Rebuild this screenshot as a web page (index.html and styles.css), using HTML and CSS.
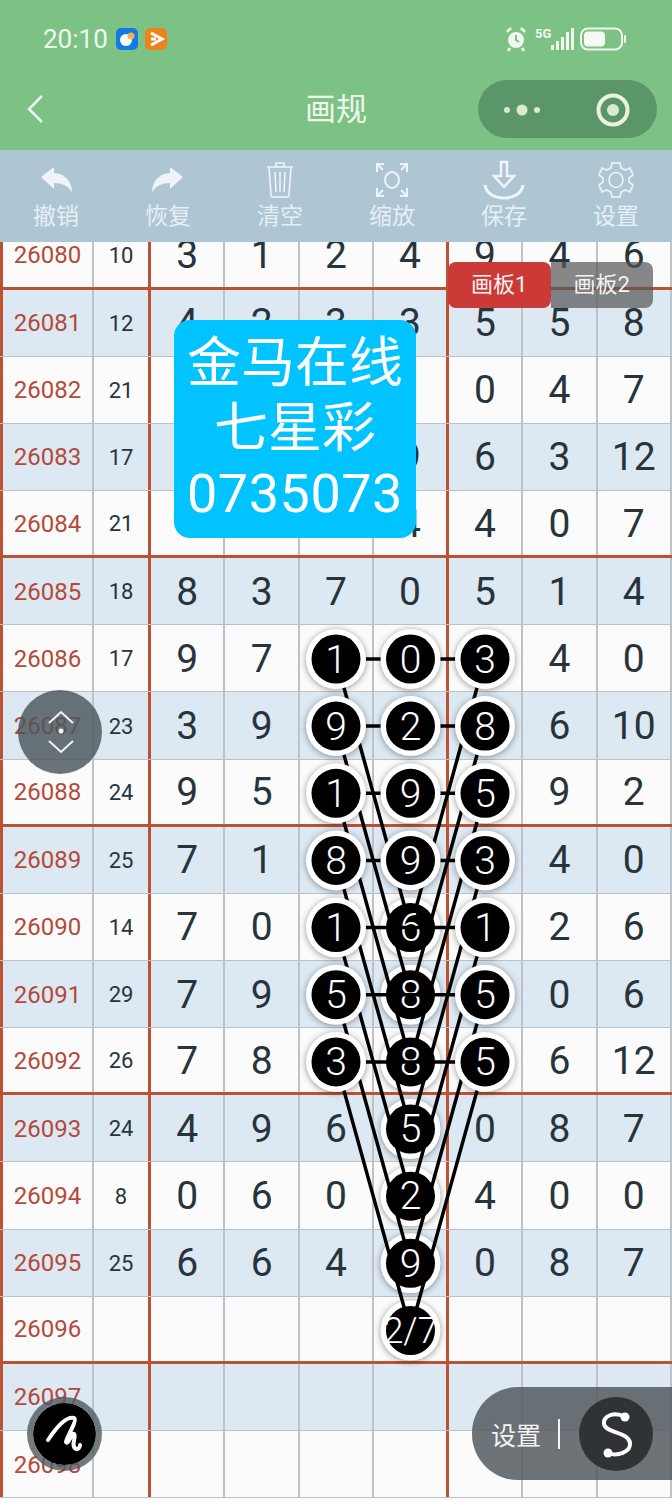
FILE: index.html
```html
<!DOCTYPE html>
<html lang="zh-CN">
<head>
  <meta charset="UTF-8">
  <title>画规</title>
  <link rel="stylesheet" href="styles.css">
</head>
<body>
  <div class="top">
    <div class="status">
      <span class="clock">20:10</span>
      <svg class="app-icon" width="22" height="22" viewBox="0 0 22 22">
        <rect width="22" height="22" rx="5" fill="#1479e8"/>
        <circle cx="10" cy="12" r="6" fill="#fff"/>
        <circle cx="15" cy="8" r="3.5" fill="#f5b342"/>
      </svg>
      <svg class="app-icon" width="22" height="22" viewBox="0 0 22 22">
        <rect width="22" height="22" rx="5" fill="#ee8419"/>
        <path d="M6 5 L17 11 L6 17 M6 11 L11 11" fill="none" stroke="#fff" stroke-width="3"/>
      </svg>
      <span class="status-gap"></span>
      <svg width="121" height="26" viewBox="0 0 121 26">
        <g fill="none" stroke="#f0f7ee">
          <circle cx="11" cy="14" r="8" fill="#f0f7ee" stroke="none"/>
          <path d="M2 6 L6 2 M20 6 L16 2 M5 22 L3 25 M17 22 L19 25" stroke-width="2.5"/>
          <path d="M11 9 V14 L14 16" stroke="#7cc285" stroke-width="2"/>
        </g>
        <text class="five-g" x="30" y="12">5G</text>
        <g fill="#f0f7ee">
          <rect x="46" y="19" width="3" height="5"/>
          <rect x="51" y="15" width="3" height="9"/>
          <rect x="56" y="11" width="3" height="13"/>
          <rect x="61" y="6" width="3" height="18"/>
          <rect x="66" y="2" width="3" height="22"/>
        </g>
        <rect x="76" y="2.5" width="41" height="21" rx="7" fill="none" stroke="#f0f7ee" stroke-width="2"/>
        <rect x="79" y="5.5" width="21" height="15" rx="4" fill="#f6faf4"/>
        <rect x="119" y="9" width="2" height="8" rx="1" fill="#f0f7ee"/>
      </svg>
    </div>
    <div class="nav">
      <svg class="back" width="20" height="30" viewBox="0 0 20 30">
        <path d="M16 2 L3 15 L16 28" fill="none" stroke="#eef6ea" stroke-width="2.5"/>
      </svg>
      <div class="title">画规</div>
      <div class="capsule">
        <svg width="179" height="58" viewBox="0 0 179 58">
          <g fill="#d9ead0">
            <circle cx="29" cy="30" r="3"/>
            <circle cx="44" cy="30" r="5.5"/>
            <circle cx="59" cy="30" r="3"/>
            <circle cx="135" cy="30" r="14.5" fill="none" stroke="#e8f2dc" stroke-width="4"/>
            <circle cx="135" cy="30" r="6"/>
          </g>
        </svg>
      </div>
    </div>
  </div>

  <div class="toolbar">
    <div class="tool">
      <svg width="44" height="40" viewBox="0 0 44 40">
        <path d="M7 17 L20 7 V13 C31 13 38 22 38 32 C34 26 28 23 20 23 V29 Z" fill="#eef4f7"/>
      </svg>
      <span>撤销</span>
    </div>
    <div class="tool">
      <svg width="44" height="40" viewBox="0 0 44 40">
        <path d="M37 17 L24 7 V13 C13 13 6 22 6 32 C10 26 16 23 24 23 V29 Z" fill="#eef4f7"/>
      </svg>
      <span>恢复</span>
    </div>
    <div class="tool">
      <svg width="44" height="40" viewBox="0 0 44 40">
        <g fill="none" stroke="#eef4f7" stroke-width="1.6">
          <path d="M9 7 H35 M18 7 V3 H26 V7"/>
          <path d="M11 7 L13 35 C13 36 14 37 15 37 H29 C30 37 31 36 31 35 L33 7"/>
          <path d="M17 12 L18 32 M22 12 V32 M27 12 L26 32"/>
        </g>
      </svg>
      <span>清空</span>
    </div>
    <div class="tool">
      <svg width="44" height="40" viewBox="0 0 44 40">
        <g fill="none" stroke="#eef4f7" stroke-width="2">
          <path d="M7 12 V4 H14 M7 4 L13 10"/>
          <path d="M37 12 V4 H30 M37 4 L31 10"/>
          <path d="M7 28 V36 H14 M7 36 L13 30"/>
          <path d="M37 28 V36 H30 M37 36 L31 30"/>
          <ellipse cx="22" cy="20" rx="7" ry="8"/>
        </g>
      </svg>
      <span>缩放</span>
    </div>
    <div class="tool">
      <svg width="44" height="40" viewBox="0 0 44 40">
        <g fill="none" stroke="#eef4f7" stroke-width="3">
          <path d="M19 2 H25 V16 H32 L22 27 L12 16 H19 Z" stroke-width="2.5"/>
          <path d="M3 25 C4 33 12 38 22 38 C32 38 40 33 41 25"/>
        </g>
      </svg>
      <span>保存</span>
    </div>
    <div class="tool">
      <svg width="44" height="40" viewBox="0 0 44 40">
        <g fill="none" stroke="#eef4f7" stroke-width="1.6">
          <path d="M18 3 H26 L27 8 L31 10 L36 8 L39 15 L35 18 V22 L39 25 L36 32 L31 30 L27 32 L26 37 H18 L17 32 L13 30 L8 32 L5 25 L9 22 V18 L5 15 L8 8 L13 10 L17 8 Z"/>
          <ellipse cx="22" cy="20" rx="7" ry="7.5"/>
        </g>
      </svg>
      <span>设置</span>
    </div>
  </div>

  <div class="board">
    <div class="rows">
      <div class="row end"><div class="no">26080</div><div class="sum">10</div><div class="num">3</div><div class="num">1</div><div class="num">2</div><div class="num mark">4</div><div class="num">9</div><div class="num">4</div><div class="num">6</div></div>
      <div class="row alt"><div class="no">26081</div><div class="sum">12</div><div class="num">4</div><div class="num">2</div><div class="num">3</div><div class="num mark">3</div><div class="num">5</div><div class="num">5</div><div class="num">8</div></div>
      <div class="row"><div class="no">26082</div><div class="sum">21</div><div class="num">9</div><div class="num">6</div><div class="num">5</div><div class="num mark">1</div><div class="num">0</div><div class="num">4</div><div class="num">7</div></div>
      <div class="row alt"><div class="no">26083</div><div class="sum">17</div><div class="num">3</div><div class="num">2</div><div class="num">3</div><div class="num mark">9</div><div class="num">6</div><div class="num">3</div><div class="num">12</div></div>
      <div class="row end"><div class="no">26084</div><div class="sum">21</div><div class="num">8</div><div class="num">5</div><div class="num">4</div><div class="num mark">4</div><div class="num">4</div><div class="num">0</div><div class="num">7</div></div>
      <div class="row alt"><div class="no">26085</div><div class="sum">18</div><div class="num">8</div><div class="num">3</div><div class="num">7</div><div class="num mark">0</div><div class="num">5</div><div class="num">1</div><div class="num">4</div></div>
      <div class="row"><div class="no">26086</div><div class="sum">17</div><div class="num">9</div><div class="num">7</div><div class="num">1</div><div class="num mark">0</div><div class="num">3</div><div class="num">4</div><div class="num">0</div></div>
      <div class="row alt"><div class="no">26087</div><div class="sum">23</div><div class="num">3</div><div class="num">9</div><div class="num">9</div><div class="num mark">2</div><div class="num">8</div><div class="num">6</div><div class="num">10</div></div>
      <div class="row end"><div class="no">26088</div><div class="sum">24</div><div class="num">9</div><div class="num">5</div><div class="num">1</div><div class="num mark">9</div><div class="num">5</div><div class="num">9</div><div class="num">2</div></div>
      <div class="row alt"><div class="no">26089</div><div class="sum">25</div><div class="num">7</div><div class="num">1</div><div class="num">8</div><div class="num mark">9</div><div class="num">3</div><div class="num">4</div><div class="num">0</div></div>
      <div class="row"><div class="no">26090</div><div class="sum">14</div><div class="num">7</div><div class="num">0</div><div class="num">1</div><div class="num mark">6</div><div class="num">1</div><div class="num">2</div><div class="num">6</div></div>
      <div class="row alt"><div class="no">26091</div><div class="sum">29</div><div class="num">7</div><div class="num">9</div><div class="num">5</div><div class="num mark">8</div><div class="num">5</div><div class="num">0</div><div class="num">6</div></div>
      <div class="row end"><div class="no">26092</div><div class="sum">26</div><div class="num">7</div><div class="num">8</div><div class="num">3</div><div class="num mark">8</div><div class="num">5</div><div class="num">6</div><div class="num">12</div></div>
      <div class="row alt"><div class="no">26093</div><div class="sum">24</div><div class="num">4</div><div class="num">9</div><div class="num">6</div><div class="num mark">5</div><div class="num">0</div><div class="num">8</div><div class="num">7</div></div>
      <div class="row"><div class="no">26094</div><div class="sum">8</div><div class="num">0</div><div class="num">6</div><div class="num">0</div><div class="num mark">2</div><div class="num">4</div><div class="num">0</div><div class="num">0</div></div>
      <div class="row alt"><div class="no">26095</div><div class="sum">25</div><div class="num">6</div><div class="num">6</div><div class="num">4</div><div class="num mark">9</div><div class="num">0</div><div class="num">8</div><div class="num">7</div></div>
      <div class="row end"><div class="no">26096</div><div class="sum"></div><div class="num"></div><div class="num"></div><div class="num"></div><div class="num mark"></div><div class="num"></div><div class="num"></div><div class="num"></div></div>
      <div class="row alt"><div class="no">26097</div><div class="sum"></div><div class="num"></div><div class="num"></div><div class="num"></div><div class="num mark"></div><div class="num"></div><div class="num"></div><div class="num"></div></div>
      <div class="row"><div class="no">26098</div><div class="sum"></div><div class="num"></div><div class="num"></div><div class="num"></div><div class="num mark"></div><div class="num"></div><div class="num"></div><div class="num"></div></div>
    </div>

    <!-- viewBox uses page coordinates -->
    <svg class="pattern" width="672" height="1258" viewBox="0 242 672 1258">
      <!-- lower middle column: rim goes under the lines -->
      <g class="rim">
        <circle cx="410.5" cy="927.6" r="30"/>
        <circle cx="410.5" cy="994.7" r="30"/>
        <circle cx="410.5" cy="1061.9" r="30"/>
        <circle cx="410.5" cy="1129" r="30"/>
        <circle cx="410.5" cy="1196.2" r="30"/>
        <circle cx="410.5" cy="1263.3" r="30"/>
        <circle cx="410.5" cy="1330.5" r="30"/>
      </g>
      <g class="links">
        <path d="M336 659 L410.5 927.6 L485 659"/>
        <path d="M336 726.1 L410.5 994.7 L485 726.1"/>
        <path d="M336 793.3 L410.5 1061.9 L485 793.3"/>
        <path d="M336 860.4 L410.5 1129 L485 860.4"/>
        <path d="M336 927.6 L410.5 1196.2 L485 927.6"/>
        <path d="M336 994.7 L410.5 1263.3 L485 994.7"/>
        <path d="M336 1061.9 L410.5 1330.5 L485 1061.9"/>
      </g>
      <g class="dots">
        <circle cx="410.5" cy="927.6" r="24.5"/>
        <circle cx="410.5" cy="994.7" r="24.5"/>
        <circle cx="410.5" cy="1061.9" r="24.5"/>
        <circle cx="410.5" cy="1129" r="24.5"/>
        <circle cx="410.5" cy="1196.2" r="24.5"/>
        <circle cx="410.5" cy="1263.3" r="24.5"/>
        <circle cx="410.5" cy="1330.5" r="24.5"/>
      </g>
      <g class="digits">
        <text x="410.5" y="941">6</text>
        <text x="410.5" y="1008">8</text>
        <text x="410.5" y="1075">8</text>
        <text x="410.5" y="1142">5</text>
        <text x="410.5" y="1209">2</text>
        <text x="410.5" y="1277">9</text>
        <text class="last" x="410.5" y="1343">2/7</text>
      </g>
      <g class="links">
        <path d="M336 659 H485"/>
        <path d="M336 726.1 H485"/>
        <path d="M336 793.3 H485"/>
        <path d="M336 860.4 H485"/>
        <path d="M336 927.6 H485"/>
        <path d="M336 994.7 H485"/>
        <path d="M336 1061.9 H485"/>
      </g>
      <g class="rim">
        <circle cx="336" cy="659" r="30"/><circle cx="410.5" cy="659" r="30"/><circle cx="485" cy="659" r="30"/>
        <circle cx="336" cy="726.1" r="30"/><circle cx="410.5" cy="726.1" r="30"/><circle cx="485" cy="726.1" r="30"/>
        <circle cx="336" cy="793.3" r="30"/><circle cx="410.5" cy="793.3" r="30"/><circle cx="485" cy="793.3" r="30"/>
        <circle cx="336" cy="860.4" r="30"/><circle cx="410.5" cy="860.4" r="30"/><circle cx="485" cy="860.4" r="30"/>
        <circle cx="336" cy="927.6" r="30"/><circle cx="485" cy="927.6" r="30"/>
        <circle cx="336" cy="994.7" r="30"/><circle cx="485" cy="994.7" r="30"/>
        <circle cx="336" cy="1061.9" r="30"/><circle cx="485" cy="1061.9" r="30"/>
      </g>
      <g class="dots">
        <circle cx="336" cy="659" r="24.5"/><circle cx="410.5" cy="659" r="24.5"/><circle cx="485" cy="659" r="24.5"/>
        <circle cx="336" cy="726.1" r="24.5"/><circle cx="410.5" cy="726.1" r="24.5"/><circle cx="485" cy="726.1" r="24.5"/>
        <circle cx="336" cy="793.3" r="24.5"/><circle cx="410.5" cy="793.3" r="24.5"/><circle cx="485" cy="793.3" r="24.5"/>
        <circle cx="336" cy="860.4" r="24.5"/><circle cx="410.5" cy="860.4" r="24.5"/><circle cx="485" cy="860.4" r="24.5"/>
        <circle cx="336" cy="927.6" r="24.5"/><circle cx="485" cy="927.6" r="24.5"/>
        <circle cx="336" cy="994.7" r="24.5"/><circle cx="485" cy="994.7" r="24.5"/>
        <circle cx="336" cy="1061.9" r="24.5"/><circle cx="485" cy="1061.9" r="24.5"/>
      </g>
      <g class="digits">
        <text x="336" y="673">1</text><text x="410.5" y="673">0</text><text x="485" y="673">3</text>
        <text x="336" y="740">9</text><text x="410.5" y="740">2</text><text x="485" y="740">8</text>
        <text x="336" y="807">1</text><text x="410.5" y="807">9</text><text x="485" y="807">5</text>
        <text x="336" y="874">8</text><text x="410.5" y="874">9</text><text x="485" y="874">3</text>
        <text x="336" y="941">1</text><text x="485" y="941">1</text>
        <text x="336" y="1008">5</text><text x="485" y="1008">5</text>
        <text x="336" y="1075">3</text><text x="485" y="1075">5</text>
      </g>
    </svg>

    <div class="tabs">
      <div class="tab on">画板1</div>
      <div class="tab">画板2</div>
    </div>

    <div class="ad">
      <div>金马在线</div>
      <div>七星彩</div>
      <div class="ad-code">0735073</div>
    </div>

    <div class="updown">
      <svg width="84" height="84" viewBox="0 0 84 84">
        <path d="M31 33 L43 22 L55 33 M31 51 L43 62 L55 51" fill="none" stroke="#f2f4f5" stroke-width="2"/>
        <circle cx="43" cy="41" r="2.5" fill="#f2f4f5"/>
      </svg>
    </div>

    <div class="pen">
      <svg width="62" height="62" viewBox="0 0 62 62">
        <path d="M15 37 C23 25 33 13 41 15 C45 17 33 35 33 39 C35 43 39 29 41 31 C44 33 37 43 43 46 C45 47 47 44 47 42" fill="none" stroke="#fff" stroke-width="4" stroke-linecap="round" stroke-linejoin="round"/>
      </svg>
    </div>

    <div class="setting">
      <span class="setting-label">设置</span>
      <span class="setting-bar"></span>
      <div class="setting-btn">
        <svg width="74" height="74" viewBox="0 0 74 74">
          <path d="M46 20 C35 14 24 19 25 27 C26 36 50 35 51 46 C52 55 38 60 29 56" fill="none" stroke="#fff" stroke-width="4" stroke-linecap="round"/>
          <circle cx="46" cy="20" r="4.5" fill="#fff"/>
          <circle cx="29" cy="56" r="4.5" fill="#fff"/>
        </svg>
      </div>
    </div>
  </div>
</body>
</html>
```

FILE: styles.css
```css
* {
  box-sizing: border-box;
}

body {
  margin: 0;
  width: 672px;
  height: 1500px;
  overflow: hidden;
  background-color: #fbfbfb;
  font-family: Roboto, "Noto Sans CJK SC", sans-serif;
}

svg {
  display: block;
}

.top {
  height: 150px;
  background-color: #7cc285;
}

.status {
  height: 80px;
  padding: 25px 46px 27px 43px;
  display: flex;
  align-items: center;
  color: #f0f7ee;
}

.clock {
  font-size: 26px;
  margin-right: 8px;
}

.app-icon {
  margin-right: 7px;
}

.status-gap {
  flex: 1;
}

.five-g {
  font-size: 13px;
  font-weight: 700;
  fill: #f0f7ee;
}

.nav {
  height: 70px;
  padding: 0 15px 0 26px;
  display: grid;
  grid-template-columns: 1fr auto 1fr;
  align-items: start;
}

.back {
  margin-top: 14px;
}

.title {
  font-size: 31px;
  line-height: 60px;
  color: #eef6ea;
  width: 120px;
  text-align: center;
  margin-left: -11px;
}

.capsule {
  justify-self: end;
  width: 179px;
  height: 58px;
  border-radius: 29px;
  background-color: #5b9668;
}

.toolbar {
  height: 92px;
  padding-top: 10px;
  background-color: #aec6d3;
  display: grid;
  grid-template-columns: repeat(6, 1fr);
}

.tool {
  display: flex;
  flex-direction: column;
  align-items: center;
  font-size: 23px;
  line-height: 30px;
  color: #e6eff3;
}

.tool span {
  margin-top: 2px;
}

.board {
  position: relative;
  height: 1258px;
  overflow: hidden;
}

.rows {
  margin-top: -19.5px;
}

.row {
  height: 67.15px;
  display: grid;
  grid-template-columns: 94px 57px repeat(7, 1fr);
  border-bottom: 1px solid #b9c2c7;
  background-color: #fbfbfb;
}

.row.alt {
  background-color: #dce8f2;
}

.row.end {
  border-bottom: 3px solid #bc5233;
}

.row > div {
  display: flex;
  align-items: center;
  justify-content: center;
  padding-top: 1px;
  border-right: 2px solid #bcc2c6;
  color: #27343c;
}

.row > .no {
  font-size: 24px;
  border-left: 3px solid #bc5233;
  color: #b5493a;
}

.row > .sum {
  font-size: 22px;
  border-right: 3px solid #bc5233;
}

.num {
  font-size: 39px;
}

.row > .mark {
  border-right: 3px solid #bc5233;
}

.pattern {
  position: absolute;
  left: 0;
  top: 0;
}

.rim circle {
  fill: #fff;
  filter: drop-shadow(0 1px 3px rgba(0, 0, 0, 0.4));
}

.links path {
  fill: none;
  stroke: #000;
  stroke-width: 3.5;
}

.dots circle {
  fill: #000;
}

.digits text {
  fill: #fff;
  font-size: 39px;
  font-weight: 300;
  text-anchor: middle;
}

.digits .last {
  font-size: 36px;
}

.tabs {
  position: absolute;
  left: 448px;
  top: 20px;
  width: 205px;
  height: 46px;
  display: flex;
  font-size: 22px;
  line-height: 46px;
  color: #f3f3f3;
  text-align: center;
}

.tab {
  flex: 1;
  background-color: rgba(85, 85, 85, 0.7);
  border-radius: 0 8px 8px 0;
}

.tab.on {
  background-color: #cc3a37;
  border-radius: 8px;
}

.ad {
  position: absolute;
  left: 174px;
  top: 78px;
  width: 242px;
  height: 218px;
  padding-top: 11px;
  border-radius: 16px;
  background-color: #00c3ff;
  color: #fff;
  font-size: 54px;
  line-height: 65px;
  text-align: center;
}

.ad-code {
  letter-spacing: 0.5px;
}

.updown {
  position: absolute;
  left: 18px;
  top: 448px;
  width: 84px;
  height: 84px;
  border-radius: 50%;
  background-color: rgba(75, 85, 92, 0.82);
}

.pen {
  position: absolute;
  left: 27px;
  top: 1155px;
  width: 75px;
  height: 74px;
  padding: 6px;
  border-radius: 50%;
  background-color: #000;
  background-clip: content-box;
  box-shadow: inset 0 0 0 6px rgba(80, 90, 95, 0.8);
}

.setting {
  position: absolute;
  left: 472px;
  top: 1145px;
  width: 200px;
  height: 93px;
  padding-left: 19px;
  border-radius: 46px 0 0 46px;
  background-color: rgba(85, 90, 95, 0.85);
  display: flex;
  align-items: center;
}

.setting-label {
  font-size: 25px;
  color: #f4f4f4;
}

.setting-bar {
  width: 2px;
  height: 30px;
  margin: 0 19px 0 17px;
  background-color: #f4f4f4;
}

.setting-btn {
  width: 74px;
  height: 74px;
  border-radius: 50%;
  background-color: #2f3335;
}
```
